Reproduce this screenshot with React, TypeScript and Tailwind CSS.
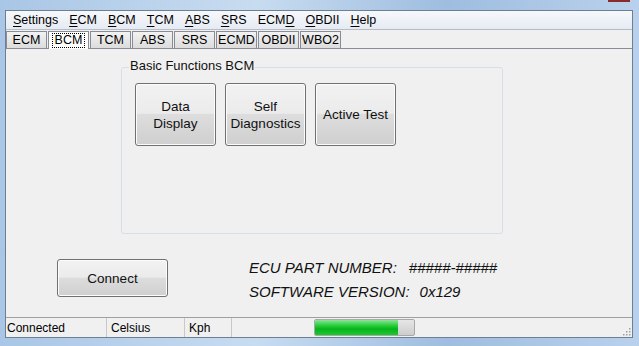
import React from 'react';

const menus = [
  { pre: '', u: 'S', post: 'ettings' },
  { pre: '', u: 'E', post: 'CM' },
  { pre: '', u: 'B', post: 'CM' },
  { pre: '', u: 'T', post: 'CM' },
  { pre: '', u: 'A', post: 'BS' },
  { pre: '', u: 'S', post: 'RS' },
  { pre: 'ECM', u: 'D', post: '' },
  { pre: '', u: 'O', post: 'BDII' },
  { pre: '', u: 'H', post: 'elp' },
];

const tabs = ['ECM', 'BCM', 'TCM', 'ABS', 'SRS', 'ECMD', 'OBDII', 'WBO2'];

const WinButton = ({ children, className = '' }: { children: React.ReactNode; className?: string }) => (
  <div
    className={`flex items-center justify-center text-center rounded-[3px] border border-[#707070] bg-[linear-gradient(to_bottom,#f2f2f2_0%,#ebebeb_48%,#dddddd_50%,#cfcfcf_100%)] shadow-[inset_0_0_0_1px_#fcfcfc] text-[13.5px] leading-[17px] text-[#111] ${className}`}
  >
    {children}
  </div>
);

export default function App() {
  return (
    <div
      className="w-[639px] h-[346px] overflow-hidden bg-[linear-gradient(to_right,#a9c6e6,#c8dcf0_40%,#9fbde0_70%,#b9d1ec)] pt-[10px] pl-[5px] pr-[6px] pb-[8px] relative"
      style={{ fontFamily: '"Liberation Sans", Arial, sans-serif' }}
    >
      <div className="absolute right-[9px] top-0 w-[22px] h-[2px] bg-[#8a2b2b]" />
      <div className="w-full h-full flex flex-col bg-[#f0f0f0] border border-[#6f7f93]">
        {/* menu bar */}
        <div className="h-[19px] flex items-center pl-[7px] gap-[11px] text-[12.5px] text-black bg-[linear-gradient(to_bottom,#f6f8fb,#e6ebf3)] border-b border-[#b6bcc6]">
          {menus.map((m, i) => (
            <span key={i}>
              {m.pre}
              <span className="underline underline-offset-2">{m.u}</span>
              {m.post}
            </span>
          ))}
        </div>
        {/* tabs */}
        <div className="h-[18px] flex items-end pl-0 gap-[1px] relative">
          {tabs.map((t) =>
            t === 'BCM' ? (
              <div
                key={t}
                className="w-[41px] h-[18px] -mb-[1px] z-10 flex items-start justify-center pt-[1px] bg-white border border-b-0 border-[#898c95] text-[12.5px]"
              >
                <span className="border border-dotted border-black px-[2px] leading-[13px]">{t}</span>
              </div>
            ) : (
              <div
                key={t}
                className="w-[41px] h-[17px] flex items-center justify-center bg-[linear-gradient(to_bottom,#f2f2f2,#dcdcdc)] border border-b-0 border-[#898c95] text-[12.5px]"
              >
                {t}
              </div>
            )
          )}
        </div>
        {/* content */}
        <div className="flex-1 border-t border-[#898c95] relative">
          <div className="absolute left-[115px] top-[18px] w-[382px] h-[167px] border border-[#d5dfe5] rounded-[3px]" />
          <div className="relative pl-[123px] pt-[7px] text-[13px] leading-[19px] text-[#111]">
            <span className="bg-[#f0f0f0] px-[1px]">Basic Functions BCM</span>
          </div>
          <div className="relative flex gap-[9px] pl-[129px] pt-[8px]">
            <WinButton className="w-[81px] h-[63px]">
              Data
              <br />
              Display
            </WinButton>
            <WinButton className="w-[81px] h-[63px]">
              Self
              <br />
              Diagnostics
            </WinButton>
            <WinButton className="w-[81px] h-[63px]">Active Test</WinButton>
          </div>
          <div className="relative flex items-start pl-[51px] pt-[113px]">
            <WinButton className="w-[111px] h-[38px]">Connect</WinButton>
            <div className="ml-[81px] -mt-[3px] italic text-[15px] leading-[24px] text-[#111]">
              <div>
                ECU PART NUMBER:<span className="ml-[12px]">#####-#####</span>
              </div>
              <div>
                SOFTWARE VERSION:<span className="ml-[10px]">0x129</span>
              </div>
            </div>
          </div>
        </div>
        {/* status bar */}
        <div className="h-[20px] flex items-center border-t border-[#a0a0a0] bg-[#f0f0f0] text-[12px] text-black relative">
          <div className="w-[101px] pl-[1px] border-r border-[#c8c8c8] h-full flex items-center">Connected</div>
          <div className="w-[78px] pl-[4px] border-r border-[#c8c8c8] h-full flex items-center">Celsius</div>
          <div className="w-[47px] pl-[4px] border-r border-[#c8c8c8] h-full flex items-center">Kph</div>
          <div className="ml-[82px] w-[101px] h-[17px] rounded-[2px] border border-[#a8a8a8] bg-[linear-gradient(to_bottom,#e6e6e6,#cdcdcd)] overflow-hidden">
            <div className="h-full w-[84%] bg-[linear-gradient(to_bottom,#8ee39a_0%,#2dcf3e_35%,#06b41b_60%,#1ec630_100%)]" />
          </div>
          <svg className="absolute right-[1px] bottom-[1px]" width="10" height="10" viewBox="0 0 10 10">
            {[
              [8, 2],
              [8, 5],
              [5, 5],
              [8, 8],
              [5, 8],
              [2, 8],
            ].map(([x, y], i) => (
              <rect key={i} x={x} y={y} width="1.5" height="1.5" fill="#a0a0a0" />
            ))}
          </svg>
        </div>
      </div>
    </div>
  );
}
